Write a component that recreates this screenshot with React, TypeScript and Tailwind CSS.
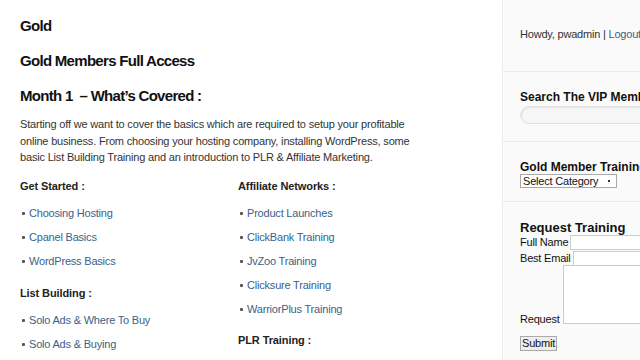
import React from 'react';

const font = { fontFamily: '"Liberation Sans", Arial, sans-serif' };

function Bullet({ children }: { children: React.ReactNode }) {
  return (
    <li className="flex items-center h-6 text-[11px] tracking-[-0.2px] text-[#3a5f8a]">
      <span className="w-[3px] h-[3px] rounded-[1px] bg-[#555] mr-[4px] ml-[2px]" />
      {children}
    </li>
  );
}

function Heading({ children }: { children: React.ReactNode }) {
  return <h4 className="text-[11px] font-bold tracking-[-0.1px] text-[#222] h-4 leading-4">{children}</h4>;
}

export default function App() {
  return (
    <div className="w-[640px] h-[360px] overflow-hidden bg-white flex" style={font}>
      <main className="w-[502px] shrink-0 pl-5 pt-[17px]">
        <h1 className="text-[15px] font-bold text-[#111] tracking-[-0.7px] leading-[18px]">Gold</h1>
        <h2 className="text-[15px] font-bold text-[#111] tracking-[-0.7px] leading-[18px] mt-[17px]">
          Gold Members Full Access
        </h2>
        <h2 className="text-[15px] font-bold text-[#111] tracking-[-0.7px] leading-[18px] mt-[17px]">
          Month 1 &nbsp;– What’s Covered :
        </h2>
        <p className="text-[11px] tracking-[-0.18px] text-[#333] leading-[16.5px] mt-[11px] w-[400px]">
          Starting off we want to cover the basics which are required to setup your profitable
          online business. From choosing your hosting company, installing WordPress, some
          basic List Building Training and an introduction to PLR &amp; Affiliate Marketing.
        </p>
        <div className="flex mt-[12px]">
          <div className="w-[218px]">
            <Heading>Get Started :</Heading>
            <ul className="mt-[8px]">
              <Bullet>Choosing Hosting</Bullet>
              <Bullet>Cpanel Basics</Bullet>
              <Bullet>WordPress Basics</Bullet>
            </ul>
            <div className="mt-[11px]">
              <Heading>List Building :</Heading>
            </div>
            <ul className="mt-[8px]">
              <Bullet>Solo Ads &amp; Where To Buy</Bullet>
              <Bullet>Solo Ads &amp; Buying</Bullet>
            </ul>
          </div>
          <div>
            <Heading>Affiliate Networks :</Heading>
            <ul className="mt-[8px]">
              <Bullet>Product Launches</Bullet>
              <Bullet>ClickBank Training</Bullet>
              <Bullet>JvZoo Training</Bullet>
              <Bullet>Clicksure Training</Bullet>
              <Bullet>WarriorPlus Training</Bullet>
            </ul>
            <div className="mt-[10px]">
              <Heading>PLR Training :</Heading>
            </div>
          </div>
        </div>
      </main>
      <aside className="w-[138px] shrink-0 overflow-hidden bg-[#fafafa] border-l border-[#eeeeee] flex flex-col">
        <section className="h-[72px] border-b border-[#ececec] pl-[17px] pt-[26px]">
          <div className="text-[11px] tracking-[-0.2px] text-[#333] whitespace-nowrap">
            Howdy, pwadmin | <span className="text-[#3a5f8a]">Logout</span>
          </div>
        </section>
        <section className="h-[70px] border-b border-[#ececec] pl-[17px] pt-[18px]">
          <h3 className="text-[12px] font-bold text-[#111] whitespace-nowrap leading-[14px]">Search The VIP Members Area</h3>
          <div className="mt-[2px] h-[18px] w-[160px] rounded-full border border-[#e2e2e2] bg-[#f6f6f6] shadow-[inset_1px_1px_2px_rgba(0,0,0,0.08)]" />
        </section>
        <section className="h-[60px] border-b border-[#ececec] pl-[17px] pt-[18px]">
          <h3 className="text-[12px] font-bold text-[#111] whitespace-nowrap leading-[14px]">Gold Member Training</h3>
          <div className="h-[14px] w-[97px] border border-[#aaa] bg-white flex items-center justify-between px-[2px] text-[11px] tracking-[-0.2px] text-[#111] leading-none whitespace-nowrap">
            <span>Select Category</span>
            <span className="w-[2px] h-[2px] bg-[#333] mr-[4px]" />
          </div>
        </section>
        <section className="flex-1 pl-[17px] pt-[18px]">
          <h3 className="text-[13px] font-bold text-[#111] whitespace-nowrap leading-[15px]">Request Training</h3>
          <div className="flex items-center text-[11px] tracking-[-0.2px] text-[#111] h-[15px] whitespace-nowrap">
            <span className="shrink-0">Full Name</span>
            <span className="shrink-0 ml-[2px] h-[15px] w-[80px] border border-[#ccc] bg-white" />
          </div>
          <div className="flex items-center text-[11px] tracking-[-0.2px] text-[#111] h-[15px] mt-[1px] whitespace-nowrap">
            <span className="shrink-0">Best Email</span>
            <span className="shrink-0 ml-[2px] h-[15px] w-[80px] border border-[#ccc] bg-white" />
          </div>
          <div className="flex items-end text-[11px] tracking-[-0.2px] text-[#111] -mt-[1px] whitespace-nowrap">
            <span className="shrink-0 leading-[10px]">Request</span>
            <span className="shrink-0 ml-[3px] h-[59px] w-[90px] border border-[#ccc] bg-white" />
          </div>
          <button className="mt-[12px] h-[15px] px-[1px] text-[11px] tracking-[-0.2px] text-[#111] leading-none border border-[#aaa] bg-[#eee]">
            Submit
          </button>
        </section>
      </aside>
    </div>
  );
}
